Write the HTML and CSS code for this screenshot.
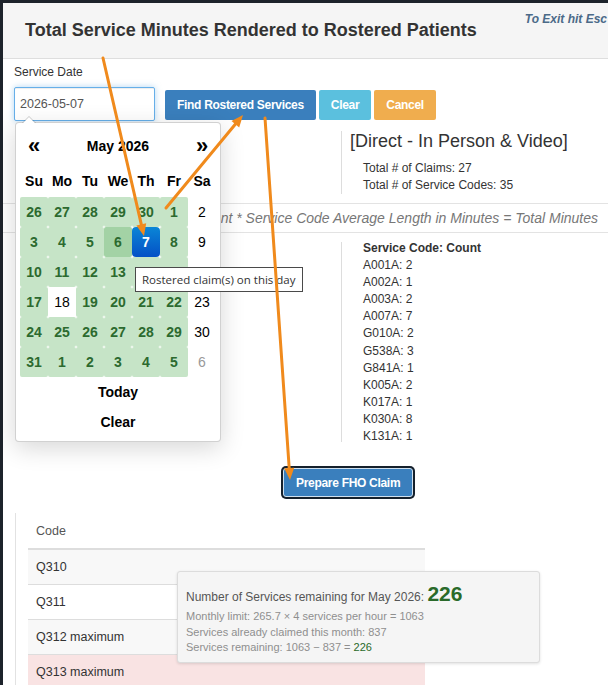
FILE: index.html
```html
<!DOCTYPE html>
<html lang="en">
<head>
<meta charset="utf-8">
<meta name="viewport" content="width=device-width">
<title>Total Service Minutes</title>
<link rel="stylesheet" href="styles.css">
</head>
<body>
<div class="page">
  <div class="modal">
    <div class="modal-header">
      <h4 class="modal-title">Total Service Minutes Rendered to Rostered Patients</h4>
      <span class="exit-hint">To Exit hit Esc</span>
    </div>

    <div class="modal-body">
      <label class="field-label" for="serviceDate">Service Date</label>
      <div class="search-row">
        <input id="serviceDate" class="date-input" type="text" value="2026-05-07">
        <button class="btn btn-primary">Find Rostered Services</button>
        <button class="btn btn-info">Clear</button>
        <button class="btn btn-warning">Cancel</button>
      </div>
    </div>

    <div class="summary">
      <div class="col-left"></div>
      <div class="col-right">
        <h3 class="claim-type">[Direct - In Person &amp; Video]</h3>
        <ul class="totals">
          <li>Total # of Claims: 27</li>
          <li>Total # of Service Codes: 35</li>
        </ul>
      </div>
    </div>

    <p class="formula">Service Code Count * Service Code Average Length in Minutes = Total Minutes</p>

    <div class="counts">
      <div class="col-left"></div>
      <div class="col-right">
        <ul class="code-list">
          <li class="list-head">Service Code: Count</li>
          <li>A001A: 2</li>
          <li>A002A: 1</li>
          <li>A003A: 2</li>
          <li>A007A: 7</li>
          <li>G010A: 2</li>
          <li>G538A: 3</li>
          <li>G841A: 1</li>
          <li>K005A: 2</li>
          <li>K017A: 1</li>
          <li>K030A: 8</li>
          <li>K131A: 1</li>
        </ul>
      </div>
    </div>

    <div class="fho-row">
      <button class="btn btn-primary btn-fho">Prepare FHO Claim</button>
    </div>

    <div class="limits-panel">
      <table class="limits">
        <thead>
          <tr><th>Code</th></tr>
        </thead>
        <tbody>
          <tr class="striped"><td>Q310</td></tr>
          <tr><td>Q311</td></tr>
          <tr class="striped"><td>Q312 maximum</td></tr>
          <tr class="over"><td>Q313 maximum</td></tr>
        </tbody>
      </table>
    </div>
  </div>

  <!-- date picker dropdown, open under the Service Date field -->
  <div class="datepicker">
    <table class="dp-table">
      <thead>
        <tr class="dp-nav">
          <th class="dp-arrow">&laquo;</th>
          <th class="dp-switch" colspan="5">May 2026</th>
          <th class="dp-arrow">&raquo;</th>
        </tr>
        <tr class="dp-dow">
          <th>Su</th><th>Mo</th><th>Tu</th><th>We</th><th>Th</th><th>Fr</th><th>Sa</th>
        </tr>
      </thead>
      <tbody>
        <tr>
          <td class="roster">26</td><td class="roster">27</td><td class="roster">28</td><td class="roster">29</td><td class="roster">30</td><td class="roster">1</td><td>2</td>
        </tr>
        <tr>
          <td class="roster">3</td><td class="roster">4</td><td class="roster">5</td><td class="roster focused">6</td><td class="active">7</td><td class="roster">8</td><td>9</td>
        </tr>
        <tr>
          <td class="roster">10</td><td class="roster">11</td><td class="roster">12</td><td class="roster">13</td><td class="roster">14</td><td class="roster">15</td><td>16</td>
        </tr>
        <tr>
          <td class="roster">17</td><td class="plain">18</td><td class="roster">19</td><td class="roster">20</td><td class="roster">21</td><td class="roster">22</td><td>23</td>
        </tr>
        <tr>
          <td class="roster">24</td><td class="roster">25</td><td class="roster">26</td><td class="roster">27</td><td class="roster">28</td><td class="roster">29</td><td>30</td>
        </tr>
        <tr>
          <td class="roster">31</td><td class="roster">1</td><td class="roster">2</td><td class="roster">3</td><td class="roster">4</td><td class="roster">5</td><td class="new">6</td>
        </tr>
      </tbody>
      <tfoot>
        <tr><th colspan="7">Today</th></tr>
        <tr><th colspan="7">Clear</th></tr>
      </tfoot>
    </table>
  </div>

  <div class="day-tip">Rostered claim(s) on this day</div>

  <div class="remaining">
    <div class="remaining-title">Number of Services remaining for May 2026: <strong class="remaining-count">226</strong></div>
    <div class="remaining-line">Monthly limit: 265.7 &times; 4 services per hour = 1063</div>
    <div class="remaining-line">Services already claimed this month: 837</div>
    <div class="remaining-line">Services remaining: 1063 &minus; 837 = <span class="ok">226</span></div>
  </div>

  <svg class="callouts" width="608" height="685" viewBox="0 0 608 685">
    <g stroke="#f08a1c" stroke-width="3" stroke-linecap="round">
      <line x1="103" y1="58" x2="141.3" y2="224.3"/>
      <line x1="166" y1="208" x2="235.3" y2="124.2"/>
      <line x1="265" y1="118" x2="289.2" y2="468"/>
    </g>
    <g fill="#f08a1c">
      <polygon points="144,236 146.2,223.2 136.4,225.4"/>
      <polygon points="243,115 239.2,127.4 231.5,121"/>
      <polygon points="290,480 294.2,467.7 284.2,468.3"/>
    </g>
  </svg>
</div>
</body>
</html>
```

FILE: styles.css
```css
* {
    box-sizing: border-box;
}
body {
    margin: 0;
    background: #1d232b;
    font-family: "Liberation Sans", Arial, sans-serif;
    font-size: 12px;
    color: #333;
}
.page {
    position: relative;
    width: 608px;
    height: 685px;
    overflow: hidden;
}
.modal {
    margin: 3px 0 0 3px;
    width: 605px;
    height: 682px;
    background: #fff;
}

/* header */
.modal-header {
    display: flex;
    justify-content: space-between;
    align-items: flex-start;
    height: 56px;
    padding-left: 22px;
    background: #f5f5f5;
    border-bottom: 1px solid #dedede;
}
.modal-title {
    margin: 16px 0 0;
    font-size: 18px;
    line-height: 22px;
    font-weight: bold;
    color: #333;
}
.exit-hint {
    margin: 9px 1px 0 0;
    font-size: 12px;
    font-style: italic;
    font-weight: bold;
    color: #4b6a88;
    white-space: nowrap;
}

/* search form */
.modal-body {
    padding: 0 11px;
}
.field-label {
    display: block;
    margin-top: 6px;
    line-height: 14px;
    font-size: 12px;
}
.search-row {
    display: flex;
    align-items: flex-start;
    margin-top: 8px;
}
.date-input {
    width: 141px;
    height: 34px;
    padding: 0 5px;
    border: 1px solid #66afe9;
    border-radius: 2px;
    box-shadow: inset 0 1px 1px rgba(0,0,0,.075), 0 0 6px rgba(102,175,233,.5);
    font-family: "Liberation Sans", Arial, sans-serif;
    font-size: 12.5px;
    color: #555;
    outline: none;
}
.btn {
    height: 30px;
    margin: 3px 0 0 3px;
    padding: 0 12px;
    border: none;
    border-radius: 2px;
    font-family: "Liberation Sans", Arial, sans-serif;
    font-size: 12px;
    font-weight: bold;
    letter-spacing: -0.3px;
    color: #fff;
}
.date-input + .btn {
    margin-left: 10px;
}
.btn-primary { background: #3a7fbd; }
.btn-info { background: #5bc0de; }
.btn-warning { background: #f0ad4e; }

/* result columns */
.summary,
.counts {
    display: grid;
    grid-template-columns: 338px 1fr;
}
.summary {
    margin: 10px 0 9px;
}
.col-right {
    border-left: 1px solid #dddddd;
}
.summary .col-right {
    padding-left: 8px;
}
.claim-type {
    margin: 0;
    font-size: 18px;
    line-height: 20px;
    font-weight: normal;
    color: #333;
}
.totals {
    list-style: none;
    margin: 9px 0 0;
    padding-left: 13px;
    line-height: 17px;
}
.formula {
    margin: 0;
    height: 30px;
    padding-right: 10px;
    border-top: 1px solid #e3e3e3;
    border-bottom: 1px solid #e3e3e3;
    line-height: 28px;
    text-align: right;
    font-size: 14px;
    font-style: italic;
    color: #777;
    white-space: nowrap;
    overflow: hidden;
}
.counts {
    margin-top: 9px;
}
.counts .col-right {
    height: 200px;
    padding-left: 21px;
}
.code-list {
    list-style: none;
    margin: -2px 0 0;
    padding: 0;
    line-height: 17.1px;
}
.list-head {
    font-weight: bold;
}

.fho-row {
    margin-top: 26px;
    padding-left: 280px;
}
.btn-fho {
    height: 29px;
    margin: 0;
    border: 1px solid #cfe0ef;
    border-radius: 3px;
    box-shadow: 0 0 0 2px #15202c;
}

/* limits table */
.limits-panel {
    margin: 16px 0 0 12px;
    padding-left: 12px;
    border-left: 1px solid #e2e2e2;
    height: 172px;
}
.limits {
    width: 397px;
    border-collapse: collapse;
}
.limits th {
    height: 36px;
    padding: 0 8px;
    border-bottom: 2px solid #dddddd;
    text-align: left;
    font-weight: normal;
    font-size: 12.5px;
    color: #555;
}
.limits td {
    height: 35px;
    padding: 0 8px;
    border-top: 1px solid #dddddd;
    font-size: 12.5px;
}
.limits .striped td { background: #f8f8f8; }
.limits .over td { background: #f9e3e3; }

/* date picker */
.datepicker {
    position: absolute;
    left: 15px;
    top: 122px;
    width: 206px;
    padding: 4px;
    background: #fff;
    border: 1px solid rgba(0,0,0,.18);
    border-radius: 4px;
    box-shadow: 0 6px 24px rgba(0,0,0,.16);
}
.datepicker:before {
    content: "";
    position: absolute;
    top: -7px;
    left: 6px;
    border-left: 7px solid transparent;
    border-right: 7px solid transparent;
    border-bottom: 7px solid rgba(0,0,0,.2);
}
.datepicker:after {
    content: "";
    position: absolute;
    top: -6px;
    left: 7px;
    border-left: 6px solid transparent;
    border-right: 6px solid transparent;
    border-bottom: 6px solid #fff;
}
.dp-table {
    border-spacing: 0;
    font-size: 14px;
    color: #000;
}
.dp-table th,
.dp-table td {
    width: 28px;
    padding: 0;
    text-align: center;
}
.dp-nav th {
    height: 38px;
    font-weight: bold;
}
.dp-nav .dp-arrow {
    font-size: 22px;
}
.dp-dow th {
    height: 32px;
    font-weight: bold;
}
.dp-table td {
    height: 30px;
}
.dp-table td.roster {
    background: #c6e4c7;
    color: #2c6a2f;
    font-weight: bold;
    border-radius: 2px;
}
.dp-table td.focused {
    background: #a3d2a5;
}
.dp-table td.active {
    background: linear-gradient(#0a86d6, #0450c6);
    color: #fff;
    font-weight: bold;
    border-radius: 4px;
}
.dp-table td.plain {
    background: #fff;
}
.dp-table td.new {
    color: #999;
}
.dp-table tfoot th {
    height: 30px;
    font-weight: bold;
}

.day-tip {
    position: absolute;
    left: 135px;
    top: 267px;
    height: 25px;
    padding: 0 6px;
    background: #fff;
    border: 1px solid #4a4a4a;
    font-family: "Open Sans", "Noto Sans", sans-serif;
    font-size: 11.5px;
    line-height: 23px;
    color: #333;
    white-space: nowrap;
}

/* remaining services popover */
.remaining {
    position: absolute;
    left: 177px;
    top: 571px;
    width: 363px;
    height: 92px;
    padding: 10px 8px 0;
    background: #f5f5f5;
    border: 1px solid #dcdcdc;
    border-radius: 3px;
    box-shadow: 0 1px 3px rgba(0,0,0,.12);
}
.remaining-title {
    font-size: 12px;
    line-height: 24px;
    color: #555;
}
.remaining-count {
    font-size: 21px;
    color: #2a6a2a;
}
.remaining-line {
    font-size: 11px;
    line-height: 15.5px;
    color: #8f8f8f;
}
.remaining-line .ok {
    color: #2a6a2a;
}

.callouts {
    position: absolute;
    left: 0;
    top: 0;
    pointer-events: none;
}
```
